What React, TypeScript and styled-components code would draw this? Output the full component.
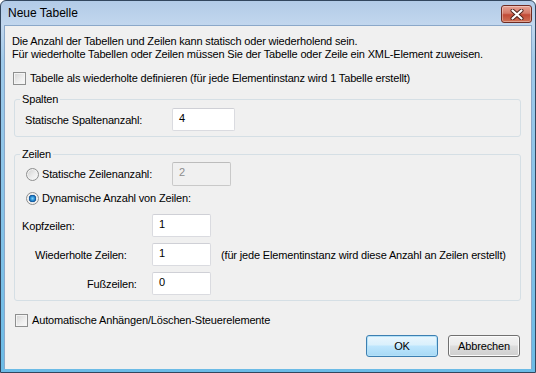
import React from "react";
import styled, { createGlobalStyle } from "styled-components";

const GlobalStyle = createGlobalStyle`
  html, body {
    margin: 0;
    padding: 0;
    background: #ffffff;
  }
  body {
    font-family: "Liberation Sans", Arial, sans-serif;
    font-size: 11px;
    letter-spacing: -0.16px;
    color: #000;
  }
`;

const Window = styled.div`
  box-sizing: border-box;
  width: 536px;
  height: 373px;
  border: 1px solid #32465e;
  border-radius: 6px 6px 0 0;
  background: linear-gradient(to bottom, #b2cbe7 0px, #c2d7ee 24px, #9fcaea 60px, #6bbbe6 100%);
  display: flex;
  flex-direction: column;
  padding: 0 3px 3px 3px;
`;

const TitleBar = styled.div`
  height: 24px;
  display: flex;
  align-items: center;
  justify-content: space-between;
`;

const Title = styled.div`
  margin-left: 4px;
  font-size: 12px;
  letter-spacing: 0;
  color: #000;
`;

const CloseButton = styled.div`
  box-sizing: border-box;
  width: 31px;
  height: 18px;
  margin-top: 2px;
  border: 1px solid #6e2b22;
  border-radius: 3px;
  background: linear-gradient(to bottom, #e7a294 0%, #d47a68 45%, #c24a36 55%, #cf7256 100%);
  box-shadow: inset 0 0 0 1px rgba(255, 255, 255, 0.35);
  display: flex;
  align-items: center;
  justify-content: center;
`;

const Client = styled.div`
  flex: 1;
  background: #f0f0f0;
  border: 1px solid #8ba8c9;
  border-bottom: none;
  padding: 9px 0 0 7px;
  display: flex;
  flex-direction: column;
`;

const Intro = styled.div`
  line-height: 13px;
`;

const CheckRow = styled.label<{ $top: number; $left: number }>`
  display: flex;
  align-items: center;
  gap: 4px;
  height: 14px;
  white-space: nowrap;
  margin-top: ${(p) => p.$top}px;
  margin-left: ${(p) => p.$left}px;
`;

const CheckBox = styled.span`
  box-sizing: border-box;
  flex-shrink: 0;
  width: 13px;
  height: 13px;
  border: 1px solid #8e8f8f;
  background: linear-gradient(135deg, #d4d4d4 0%, #efefef 60%, #fafafa 100%);
  box-shadow: inset 0 0 0 1px #f4f4f4;
`;

const Group = styled.fieldset<{ $top: number }>`
  margin: ${(p) => p.$top}px 10px 0 2px;
  padding: 1px 10px 5px 7px;
  border: 1px solid #d5dfe5;
  border-radius: 3px;
  min-width: 0;
`;

const Legend = styled.legend`
  padding: 0 2px;
  margin-left: -2px;
  line-height: 13px;
`;

const FieldRow = styled.div<{ $top?: number; $indent?: number; $labelWidth: number }>`
  display: grid;
  grid-template-columns: ${(p) => p.$labelWidth}px auto 1fr;
  align-items: center;
  margin-top: ${(p) => p.$top ?? 0}px;
  margin-left: ${(p) => p.$indent ?? 0}px;
`;

const FieldLabel = styled.span<{ $indent?: number }>`
  padding-left: ${(p) => p.$indent ?? 0}px;
  white-space: nowrap;
`;

const RadioLabel = styled.label`
  display: flex;
  align-items: center;
  gap: 3px;
  height: 14px;
  white-space: nowrap;
`;

const Radio = styled.span<{ $checked?: boolean }>`
  box-sizing: border-box;
  flex-shrink: 0;
  width: 13px;
  height: 13px;
  border-radius: 50%;
  border: 1px solid #8e8f8f;
  background: ${(p) =>
    p.$checked
      ? "radial-gradient(circle at 50% 50%, #7fd0f7 0px, #2a8fd5 2px, #0f4f93 3.5px, #e6e6e6 4px, #f6f6f6 100%)"
      : "linear-gradient(135deg, #cfcfcf 0%, #ececec 55%, #fbfbfb 100%)"};
  box-shadow: inset 0 0 0 1px #f2f2f2;
`;

const TextBox = styled.div<{ $width: number; $height?: number; $disabled?: boolean }>`
  box-sizing: border-box;
  width: ${(p) => p.$width}px;
  height: ${(p) => p.$height ?? 23}px;
  padding: 3px 5px 0 6px;
  line-height: 13px;
  border: 1px solid ${(p) => (p.$disabled ? "#c9c9c9" : "#dadbe0")};
  border-top-color: ${(p) => (p.$disabled ? "#bcbcbc" : "#cfd0d6")};
  border-radius: 2px;
  background: ${(p) => (p.$disabled ? "#f0f0f0" : "#ffffff")};
  color: ${(p) => (p.$disabled ? "#8d8d8d" : "#000")};
`;

const Note = styled.span`
  margin-left: 10px;
  white-space: nowrap;
`;

const ButtonRow = styled.div`
  display: flex;
  justify-content: flex-end;
  gap: 10px;
  margin-top: 8px;
  margin-right: 11px;
`;

const Button = styled.div<{ $default?: boolean; $width: number }>`
  box-sizing: border-box;
  width: ${(p) => p.$width}px;
  height: 22px;
  border-radius: 3px;
  display: flex;
  align-items: center;
  justify-content: center;
  border: 1px solid ${(p) => (p.$default ? "#3c7fb1" : "#707070")};
  background: ${(p) =>
    p.$default
      ? "linear-gradient(to bottom, #eaf6fd 0%, #d9f0fc 45%, #bee6fd 50%, #a7d9f5 100%)"
      : "linear-gradient(to bottom, #f2f2f2 0%, #ebebeb 45%, #dddddd 50%, #cfcfcf 100%)"};
  box-shadow: inset 0 0 0 1px ${(p) => (p.$default ? "#b4e1f8" : "#fbfbfb")};
`;

export default function App() {
  return (
    <>
      <GlobalStyle />
      <Window>
        <TitleBar>
          <Title>Neue Tabelle</Title>
          <CloseButton>
            <svg width="14" height="11" viewBox="0 0 14 11">
              <path d="M2.5 1.5 L11.5 9.5 M11.5 1.5 L2.5 9.5" stroke="#4a1f18" strokeWidth="4" strokeLinecap="round" />
              <path d="M2.5 1.5 L11.5 9.5 M11.5 1.5 L2.5 9.5" stroke="#ffffff" strokeWidth="2.2" strokeLinecap="round" />
            </svg>
          </CloseButton>
        </TitleBar>
        <Client>
          <Intro>
            Die Anzahl der Tabellen und Zeilen kann statisch oder wiederholend sein.
            <br />
            Für wiederholte Tabellen oder Zeilen müssen Sie der Tabelle oder Zeile ein XML-Element zuweisen.
          </Intro>
          <CheckRow $top={10} $left={1}>
            <CheckBox />
            Tabelle als wiederholte definieren (für jede Elementinstanz wird 1 Tabelle erstellt)
          </CheckRow>

          <Group $top={8}>
            <Legend>Spalten</Legend>
            <FieldRow $indent={3} $labelWidth={147} $top={1}>
              <FieldLabel>Statische Spaltenanzahl:</FieldLabel>
              <TextBox $width={63}>4</TextBox>
            </FieldRow>
          </Group>

          <Group $top={11}>
            <Legend>Zeilen</Legend>
            <FieldRow $indent={4} $labelWidth={146}>
              <RadioLabel>
                <Radio />
                Statische Zeilenanzahl:
              </RadioLabel>
              <TextBox $width={59} $height={24} $disabled>
                2
              </TextBox>
            </FieldRow>
            <FieldRow $indent={4} $labelWidth={146} $top={5}>
              <RadioLabel>
                <Radio $checked />
                Dynamische Anzahl von Zeilen:
              </RadioLabel>
            </FieldRow>
            <FieldRow $labelWidth={130} $top={9}>
              <FieldLabel>Kopfzeilen:</FieldLabel>
              <TextBox $width={59}>1</TextBox>
            </FieldRow>
            <FieldRow $labelWidth={130} $top={6}>
              <FieldLabel $indent={13}>Wiederholte Zeilen:</FieldLabel>
              <TextBox $width={59}>1</TextBox>
              <Note>(für jede Elementinstanz wird diese Anzahl an Zeilen erstellt)</Note>
            </FieldRow>
            <FieldRow $labelWidth={130} $top={6}>
              <FieldLabel $indent={65}>Fußzeilen:</FieldLabel>
              <TextBox $width={59}>0</TextBox>
            </FieldRow>
          </Group>

          <CheckRow $top={12} $left={3}>
            <CheckBox />
            Automatische Anhängen/Löschen-Steuerelemente
          </CheckRow>

          <ButtonRow>
            <Button $default $width={72}>
              OK
            </Button>
            <Button $width={72}>Abbrechen</Button>
          </ButtonRow>
        </Client>
      </Window>
    </>
  );
}
